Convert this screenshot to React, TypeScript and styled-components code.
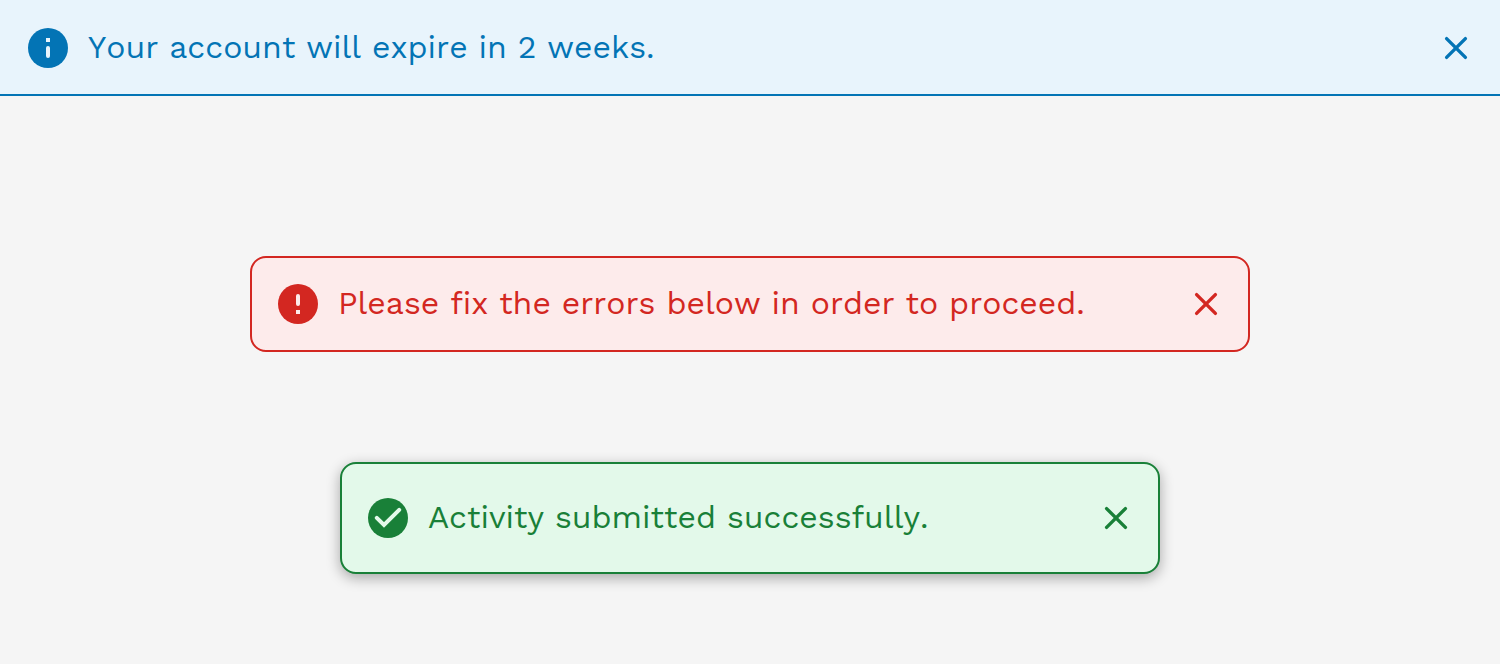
import React from "react";
import styled, { createGlobalStyle, css } from "styled-components";

type Tone = "info" | "error" | "success";
type Variant = "banner" | "inline" | "toast";

const tones: Record<Tone, { main: string; surface: string }> = {
  info: { main: "#0374b5", surface: "#e8f4fc" },
  error: { main: "#d32721", surface: "#fdebeb" },
  success: { main: "#198038", surface: "#e3f9ea" },
};

const GlobalStyle = createGlobalStyle`
  *, *::before, *::after {
    box-sizing: border-box;
  }
  body {
    margin: 0;
    background: #f5f5f5;
    font-family: "Work Sans", Inter, "Noto Sans", sans-serif;
    font-weight: 400;
    font-kerning: none;
    font-variant-ligatures: none;
  }
`;

const Page = styled.main`
  display: flex;
  flex-direction: column;
  align-items: center;
`;

const variants = {
  banner: css`
    padding: 28px 28px 26px;
    border-bottom-width: 2px;
  `,
  inline: css`
    max-width: 1000px;
    margin-top: 160px;
    padding: 26px;
    border-width: 2px;
    border-radius: 16px;
  `,
  toast: css`
    max-width: 820px;
    margin: 110px 0 90px;
    padding: 34px 26px;
    border-width: 2px;
    border-radius: 16px;
    box-shadow: 0 4px 14px rgba(0, 0, 0, 0.32);
  `,
};

const AlertBox = styled.div<{ $tone: Tone; $variant: Variant }>`
  display: flex;
  align-items: center;
  gap: 20px;
  width: 100%;
  color: ${({ $tone }) => tones[$tone].main};
  background: ${({ $tone }) => tones[$tone].surface};
  border: 0 solid currentColor;
  ${({ $variant }) => variants[$variant]}
`;

const StatusIcon = styled.svg`
  flex: none;
  width: 40px;
  height: 40px;
`;

const Message = styled.p`
  flex: 1;
  margin: 0;
  padding-bottom: 2px;
  font-size: 32px;
  line-height: 38px;
`;

const CloseButton = styled.button`
  flex: none;
  display: flex;
  width: 32px;
  height: 32px;
  padding: 0;
  border: 0;
  color: inherit;
  background: transparent;
  cursor: pointer;
`;

const CloseIcon = styled.svg`
  width: 32px;
  height: 32px;
  fill: none;
  stroke: currentColor;
  stroke-width: 3.4;
  stroke-linecap: round;
`;

function ToneIcon({ tone }: { tone: Tone }) {
  const mark = tones[tone].surface;
  return (
    <StatusIcon viewBox="0 0 40 40" aria-hidden="true">
      <circle cx="20" cy="20" r="20" fill="currentColor" />
      {tone === "info" && (
        <g fill={mark}>
          <rect x="18" y="10" width="4" height="4" />
          <rect x="18" y="18" width="4" height="12" rx="2" />
        </g>
      )}
      {tone === "error" && (
        <g fill={mark}>
          <rect x="18" y="10" width="4" height="12" rx="2" />
          <rect x="18" y="26" width="4" height="4" />
        </g>
      )}
      {tone === "success" && (
        <path
          d="M8.8 19.8 16 27 31.2 11.8"
          fill="none"
          stroke={mark}
          strokeWidth="4"
          strokeLinecap="round"
        />
      )}
    </StatusIcon>
  );
}

interface AlertProps {
  tone: Tone;
  variant: Variant;
  children: React.ReactNode;
}

function Alert({ tone, variant, children }: AlertProps) {
  return (
    <AlertBox $tone={tone} $variant={variant} role={tone === "error" ? "alert" : "status"}>
      <ToneIcon tone={tone} />
      <Message>{children}</Message>
      <CloseButton type="button" aria-label="Close">
        <CloseIcon viewBox="0 0 32 32" aria-hidden="true">
          <path d="M6.6 6.6 25.4 25.4M25.4 6.6 6.6 25.4" />
        </CloseIcon>
      </CloseButton>
    </AlertBox>
  );
}

export default function App() {
  return (
    <>
      <GlobalStyle />
      <Page>
        <Alert tone="info" variant="banner">Your account will expire in 2 weeks.</Alert>
        <Alert tone="error" variant="inline">Please fix the errors below in order to proceed.</Alert>
        <Alert tone="success" variant="toast">Activity submitted successfully.</Alert>
      </Page>
    </>
  );
}
